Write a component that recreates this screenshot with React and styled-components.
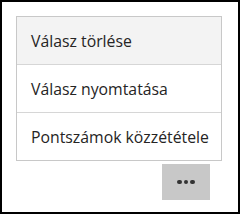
import React from 'react';
import styled, { createGlobalStyle } from 'styled-components';

const GlobalStyle = createGlobalStyle`
  html, body { margin: 0; padding: 0; background: #fff; }
`;

const Frame = styled.div`
  box-sizing: border-box;
  width: 240px;
  height: 214px;
  border: 2px solid #000;
  padding: 14px;
  background: #fff;
  font-family: "Open Sans", "Noto Sans", sans-serif;
`;

const Menu = styled.ul`
  list-style: none;
  margin: 0;
  padding: 0;
  width: 206px;
  box-sizing: border-box;
  border: 1px solid #c8c8c8;
  background: #fff;
`;

const Item = styled.li`
  height: 47px;
  display: flex;
  align-items: center;
  padding-left: 14px;
  font-size: 15.8px;
  color: #252424;
  white-space: nowrap;
  background: ${p => (p.$hover ? '#f3f3f3' : '#fff')};
  & + & { border-top: 1px solid #d6d6d6; }
`;

const Footer = styled.div`
  display: flex;
  justify-content: flex-end;
  width: 206px;
  padding-right: 12px;
  box-sizing: border-box;
  margin-top: 3px;
`;

const MoreButton = styled.button`
  width: 48px;
  height: 36px;
  border: none;
  padding: 0;
  background: #c8c8c8;
  display: flex;
  align-items: center;
  justify-content: center;
  gap: 2px;
`;

const Dot = styled.span`
  width: 4.5px;
  height: 4.5px;
  border-radius: 50%;
  background: #333;
`;

const items = ['Válasz törlése', 'Válasz nyomtatása', 'Pontszámok közzététele'];

export default function App() {
  return (
    <>
      <GlobalStyle />
      <Frame>
        <Menu>
          {items.map((t, i) => (
            <Item key={t} $hover={i === 0}>{t}</Item>
          ))}
        </Menu>
        <Footer>
          <MoreButton aria-label="More">
            <Dot /><Dot /><Dot />
          </MoreButton>
        </Footer>
      </Frame>
    </>
  );
}
